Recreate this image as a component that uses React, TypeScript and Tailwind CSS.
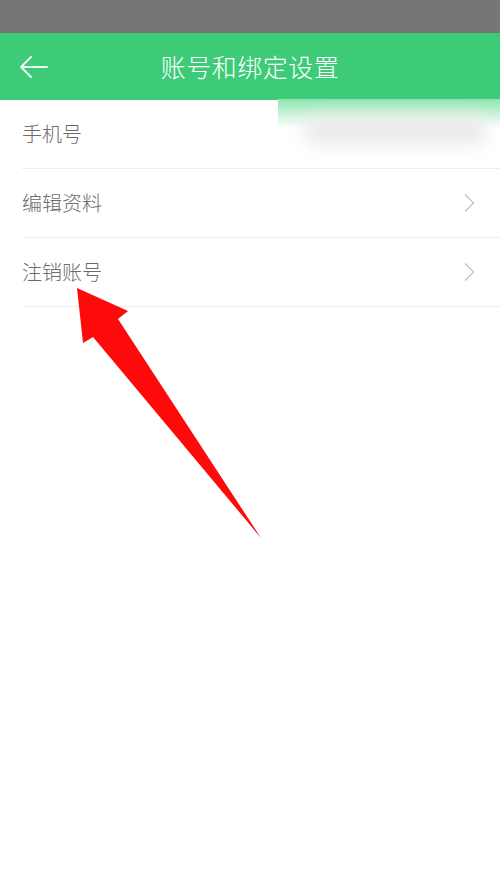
const rows = [
  { label: "手机号", arrow: false },
  { label: "编辑资料", arrow: true },
  { label: "注销账号", arrow: true },
];

const font = { fontFamily: '"Noto Sans CJK SC", "Noto Sans", sans-serif' };

export default function App() {
  return (
    <div className="relative min-h-[889px] w-[500px] overflow-hidden bg-white" style={font}>
      {/* status bar */}
      <div className="h-[33px] bg-[#767676]" />

      {/* header */}
      <div className="relative flex h-[67px] items-center justify-center bg-[#3dcb78]">
        <svg
          width="30"
          height="26"
          viewBox="0 0 30 26"
          fill="none"
          stroke="#eafaf0"
          strokeWidth="2"
          strokeLinecap="round"
          strokeLinejoin="round"
          className="absolute left-[19px] top-[21px]"
        >
          <path d="M28 13H3M12 3L2 13l10 10" />
        </svg>
        <h1 className="text-[25px] font-light tracking-[0.5px] text-white">账号和绑定设置</h1>
      </div>

      {/* list */}
      <div className="pl-[22px]">
        {rows.map((row, i) => (
          <div
            key={row.label}
            className="relative flex h-[69px] items-center justify-between border-b border-[#eeeeee] pr-[25px]"
          >
            <span className="text-[20px] font-light text-[#6b6b6b]">{row.label}</span>
            {row.arrow && (
              <svg width="12" height="20" viewBox="0 0 12 20" fill="none" stroke="#c4c4c4" strokeWidth="1.3">
                <path d="M2 1.5L10.5 10L2 18.5" />
              </svg>
            )}
            {i === 0 && (
              <div className="absolute -top-px right-0 h-[59px] w-[222px] bg-gradient-to-b from-[#8ee4b2] via-white to-white">
                <div className="absolute left-[25px] top-[18px] h-[28px] w-[185px] rounded-full bg-[#ebebeb] blur-[8px]" />
              </div>
            )}
          </div>
        ))}
      </div>

      {/* red annotation arrow */}
      <svg
        width="500"
        height="889"
        viewBox="0 0 500 889"
        className="pointer-events-none absolute left-0 top-0"
      >
        <path d="M77 288 L128 311 L118 319 L261 538 L93 337 L83 343 Z" fill="#ff0a0a" />
      </svg>
    </div>
  );
}
